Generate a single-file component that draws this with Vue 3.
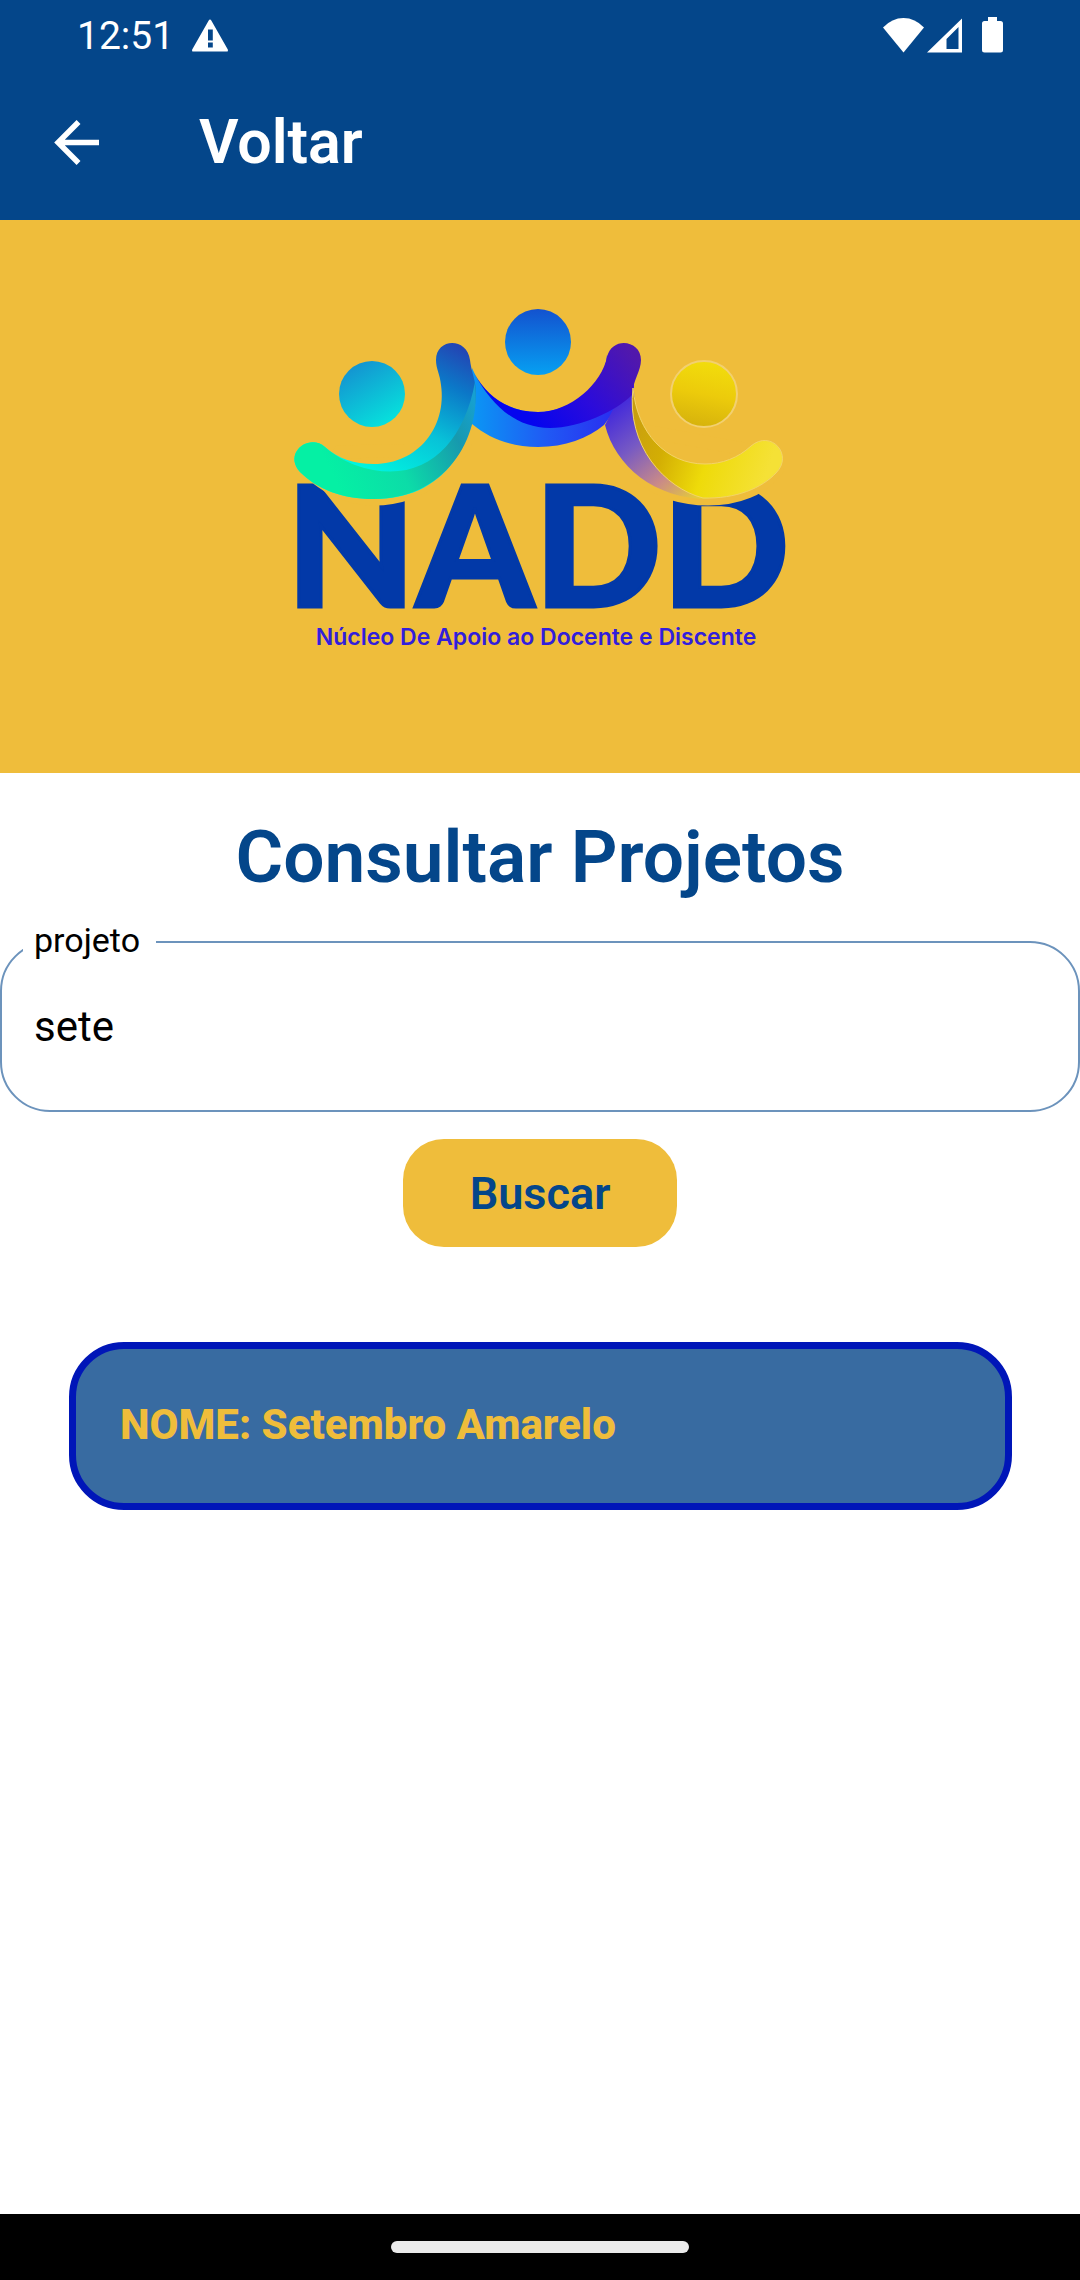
<script setup>
import { ref } from 'vue'

const query = ref('sete')
const projects = ref([{ id: 1, name: 'Setembro Amarelo' }])
</script>

<template>
  <div class="screen">
    <header class="top">
      <div class="status">
        <span class="clock">12:51</span>
        <svg class="warning" viewBox="0 0 36 33" aria-hidden="true">
          <path fill="#fff" fill-rule="evenodd" d="M18 0.6Q18.8 0.6 19.3 1.5L35.8 30.5Q36.4 32.6 34.6 32.6H1.4Q-0.4 32.6 0.2 30.5L16.7 1.5Q17.2 0.6 18 0.6ZM16 10.6V21.4H20.8V10.6ZM16 23.6V28.4H20.8V23.6Z" />
        </svg>
        <svg class="signals" viewBox="0 0 120 36" aria-hidden="true">
          <path fill="#fff" d="M0 10.5Q9 1 20.5 1T41 10.5L20.5 35.5Z" />
          <path fill="#fff" fill-rule="evenodd" d="M44 35.5L79 1.5V35.5ZM63.5 32H75.5V10L63.5 22Z" />
          <path fill="#fff" d="M105 0H114V4H117.5Q120 4 120 6.5V33Q120 35.5 117.5 35.5H101.5Q99 35.5 99 33V6.5Q99 4 101.5 4H105Z" />
        </svg>
      </div>
      <div class="bar">
        <button class="back" type="button" aria-label="Voltar">
          <svg viewBox="0 0 44 44" aria-hidden="true">
            <path d="M24 2L4 22L24 42M3 22H44" fill="none" stroke="#fff" stroke-width="5.4" />
          </svg>
        </button>
        <span class="bar-title">Voltar</span>
      </div>
    </header>

    <section class="banner">
      <svg class="logo" viewBox="280 290 520 370" role="img" aria-label="NADD">
        <defs>
          <linearGradient id="headLeft" x1="0" y1="0" x2="0.6" y2="1">
            <stop offset="0" stop-color="#1687cf" />
            <stop offset="1" stop-color="#07dfdc" />
          </linearGradient>
          <linearGradient id="headMid" x1="0" y1="0" x2="0" y2="1">
            <stop offset="0" stop-color="#1352cf" />
            <stop offset="1" stop-color="#06a0f2" />
          </linearGradient>
          <linearGradient id="headRight" x1="0.6" y1="0" x2="0.4" y2="1">
            <stop offset="0" stop-color="#f2dd0c" />
            <stop offset="0.5" stop-color="#eccb0b" />
            <stop offset="1" stop-color="#d6b20c" />
          </linearGradient>
          <linearGradient id="armLeft" gradientUnits="userSpaceOnUse" x1="455" y1="345" x2="385" y2="480">
            <stop offset="0" stop-color="#2346b4" />
            <stop offset="0.25" stop-color="#0b78c8" />
            <stop offset="0.6" stop-color="#08c2d8" />
            <stop offset="1" stop-color="#00f5e0" />
          </linearGradient>
          <linearGradient id="armLeftLow" gradientUnits="userSpaceOnUse" x1="330" y1="470" x2="474" y2="400">
            <stop offset="0" stop-color="#05f0a4" />
            <stop offset="0.4" stop-color="#0cdca8" />
            <stop offset="0.8" stop-color="#1799ae" />
            <stop offset="1" stop-color="#16a0d0" />
          </linearGradient>
          <linearGradient id="armMid" gradientUnits="userSpaceOnUse" x1="474" y1="400" x2="620" y2="400">
            <stop offset="0" stop-color="#0b95f4" />
            <stop offset="0.5" stop-color="#2059f4" />
            <stop offset="1" stop-color="#2a2af0" />
          </linearGradient>
          <linearGradient id="armMidTop" gradientUnits="userSpaceOnUse" x1="535" y1="425" x2="630" y2="350">
            <stop offset="0" stop-color="#0505ee" />
            <stop offset="0.45" stop-color="#2a0bdc" />
            <stop offset="1" stop-color="#5118ac" />
          </linearGradient>
          <linearGradient id="armRightLow" gradientUnits="userSpaceOnUse" x1="620" y1="400" x2="700" y2="498">
            <stop offset="0" stop-color="#4128dc" />
            <stop offset="0.35" stop-color="#7659c4" />
            <stop offset="0.7" stop-color="#c98a88" />
            <stop offset="1" stop-color="#e6cf35" />
          </linearGradient>
          <linearGradient id="armRight" gradientUnits="userSpaceOnUse" x1="632" y1="400" x2="775" y2="450">
            <stop offset="0" stop-color="#c79c10" />
            <stop offset="0.3" stop-color="#d3ae04" />
            <stop offset="0.6" stop-color="#eedb0a" />
            <stop offset="1" stop-color="#f5e136" />
          </linearGradient>
        </defs>

        <text class="wordmark" x="286" y="607">NADD</text>

        <g fill="#efbd3b" stroke="#efbd3b" stroke-width="13">
          <path d="M322 482C336 492 354 499 374 499C425 499 463 462 472 425L430 450L340 452Z" />
          <path d="M605 425C615 465 655 499 708 499C738 499 762 489 776 471L750 450L640 430Z" />
        </g>

        <path fill="url(#armMid)" d="M472 368C483 395 507 412 538 412C572 412 605 385 607 355L630 390L604 425C588 438 565 447 538 447C512 447 490 439 472 424Z" />
        <path fill="url(#armRightLow)" d="M634 380L620 396L605 425C615 466 655 499 708 499L700 490C660 475 632 440 634 380Z" />
        <path fill="url(#armMidTop)" d="M474 373C488 398 510 412 538 412C571 412 602 383 607 357C612 336 641 340 641 360C641 371 633 380 632 395C616 411 580 428 550 428C516 428 492 406 474 373Z" />
        <path fill="url(#armRight)" stroke="#f3d468" stroke-width="1" d="M633 388C637 433 666 464 705 464C722 464 738 458 751 446C771 429 794 455 776 473C762 488 736 499 703 498C665 488 626 446 633 388Z" />

        <path fill="url(#armLeft)" d="M325 447C339 459 354 464 374 464C418 464 447 427 441 385C440 374 436 369 436 360C436 338 467 337 470 360C471 370 476 382 476 392C475 430 455 499 374 499C342 499 317 489 300 472C283 453 309 433 325 447Z" />
        <path fill="url(#armLeftLow)" d="M325 447C335 456 345 461 355 465C420 488 463 448 475 382C482 440 444 499 374 499C342 499 317 489 300 472C283 453 309 433 325 447Z" />

        <circle cx="372" cy="394" r="33" fill="url(#headLeft)" />
        <circle cx="538" cy="342" r="33" fill="url(#headMid)" />
        <circle cx="704" cy="394" r="33" fill="url(#headRight)" stroke="#f2d070" stroke-width="2" />

        <text class="tagline" x="536" y="645" text-anchor="middle">Núcleo De Apoio ao Docente e Discente</text>
      </svg>
    </section>

    <main class="content">
      <h1 class="title">Consultar Projetos</h1>
      <form class="search" @submit.prevent>
        <div class="field">
          <label class="field-label" for="project">projeto</label>
          <input id="project" v-model="query" class="field-input" type="text" />
        </div>
        <button class="submit" type="submit">Buscar</button>
      </form>
      <ul class="results">
        <li v-for="project in projects" :key="project.id" class="card">NOME: {{ project.name }}</li>
      </ul>
    </main>

    <footer class="nav"><span class="pill"></span></footer>
  </div>
</template>

<style>
body {
  margin: 0;
}
</style>

<style scoped>
.screen {
  display: flex;
  flex-direction: column;
  min-height: 100vh;
  background: #fff;
  font-family: Roboto, "Liberation Sans", sans-serif;
}
.top {
  background: #04468a;
  color: #fff;
}
.status {
  display: flex;
  align-items: center;
  box-sizing: border-box;
  height: 68px;
  padding: 2px 77px 0;
}
.clock {
  padding-top: 2px;
  font-size: 39px;
  line-height: 48px;
}
.warning {
  width: 36px;
  height: 33px;
  margin-left: 18px;
}
.signals {
  width: 120px;
  height: 36px;
  margin-left: auto;
}
.bar {
  display: flex;
  align-items: center;
  gap: 100px;
  box-sizing: border-box;
  height: 152px;
  padding: 0 54px 4px;
}
.back {
  display: flex;
  padding: 0;
  border: 0;
  background: none;
}
.back svg {
  width: 45px;
  height: 45px;
}
.bar-title {
  font-size: 61px;
  font-weight: 600;
  line-height: 72px;
}
.banner {
  display: flex;
  justify-content: center;
  padding: 70px 0 113px;
  background: #efbd3b;
}
.logo {
  width: 520px;
  height: 370px;
}
.wordmark {
  fill: #0239a8;
  stroke: #0239a8;
  stroke-width: 3px;
  font-family: Lato, sans-serif;
  font-size: 168px;
  font-weight: 900;
}
.tagline {
  fill: #321edc;
  font-family: Inter, sans-serif;
  font-size: 23px;
  font-weight: 600;
}
.content {
  flex: 1;
}
.title {
  margin: 40px 0 0;
  color: #04468a;
  font-size: 73px;
  font-weight: 600;
  line-height: 88px;
  text-align: center;
}
.search {
  display: flex;
  flex-direction: column;
  align-items: center;
  gap: 27px;
  margin-top: 40px;
}
.field {
  position: relative;
  box-sizing: border-box;
  width: 100%;
  border: 2px solid #6c93bc;
  border-radius: 50px;
}
.field-label {
  position: absolute;
  top: -22px;
  left: 21px;
  padding: 0 16px 0 11px;
  background: #fff;
  color: #000;
  font-size: 34px;
  line-height: 38px;
}
.field-input {
  display: block;
  box-sizing: border-box;
  width: 100%;
  height: 167px;
  padding: 0 32px;
  border: 0;
  outline: 0;
  background: none;
  color: #000;
  font: 400 42px Roboto, "Liberation Sans", sans-serif;
}
.submit {
  height: 108px;
  padding: 0 67px;
  border: 0;
  border-radius: 41px;
  background: #efbd3b;
  color: #04468a;
  font: 600 45px Roboto, "Liberation Sans", sans-serif;
}
.results {
  margin: 95px 68px 0 69px;
  padding: 0;
  list-style: none;
}
.card {
  padding: 52px 44px 54px;
  border: 7px solid #0016b8;
  border-radius: 55px;
  background: #386ba1;
  color: #efbd3b;
  font-size: 42px;
  font-weight: 800;
  line-height: 48px;
}
.nav {
  display: flex;
  align-items: center;
  justify-content: center;
  height: 66px;
  background: #000;
}
.pill {
  width: 298px;
  height: 12px;
  border-radius: 6px;
  background: #eaeaea;
}
</style>
